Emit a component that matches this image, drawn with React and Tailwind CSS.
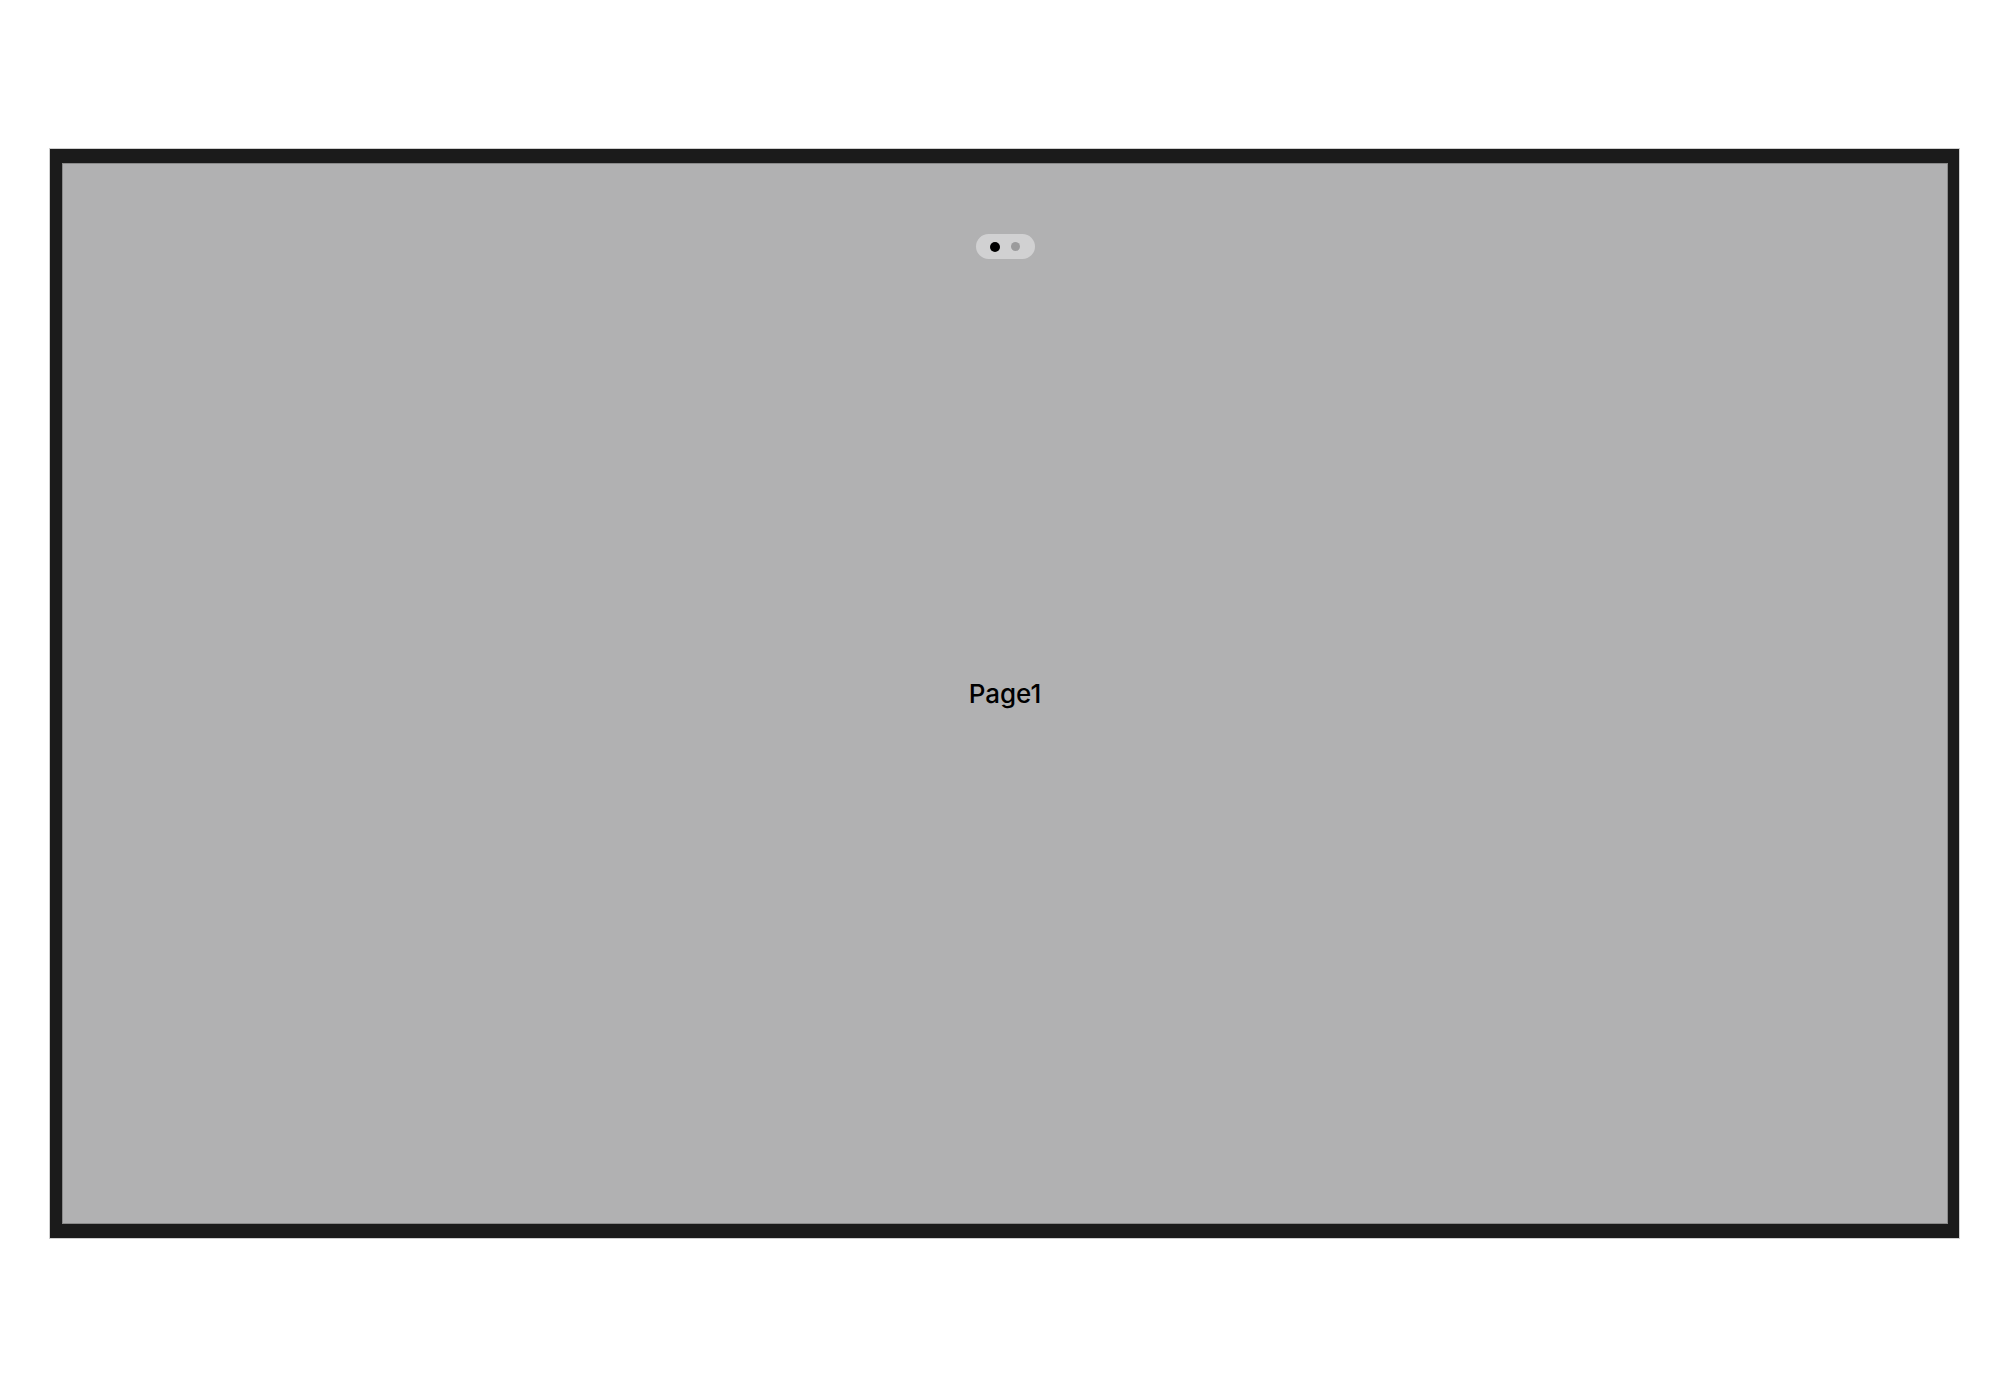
export default function App() {
  return (
    <div className="w-[2010px] h-[1386px] bg-white pt-[148px] pl-[49px]" style={{ fontFamily: 'Inter, "Noto Sans", sans-serif' }}>
      <div className="w-[1911px] h-[1091px] bg-[#1b1b1b] border border-[#cfcfcf] pt-[14px] pl-[12px] pr-[11px] pb-[14px] flex">
        <div className="flex-1 bg-[#b1b1b2] border border-[#8a8a8a] flex flex-col items-center relative">
          <div className="mt-[70px] w-[59px] h-[25px] rounded-full bg-[#d1d1d2] flex items-center justify-center gap-[11px]">
            <div className="w-[10px] h-[10px] rounded-full bg-black" />
            <div className="w-[9px] h-[9px] rounded-full bg-[#9b9b9c]" />
          </div>
          <div className="absolute inset-0 flex items-center justify-center">
            <span className="text-[26px] font-medium text-black leading-none">Page1</span>
          </div>
        </div>
      </div>
    </div>
  );
}
